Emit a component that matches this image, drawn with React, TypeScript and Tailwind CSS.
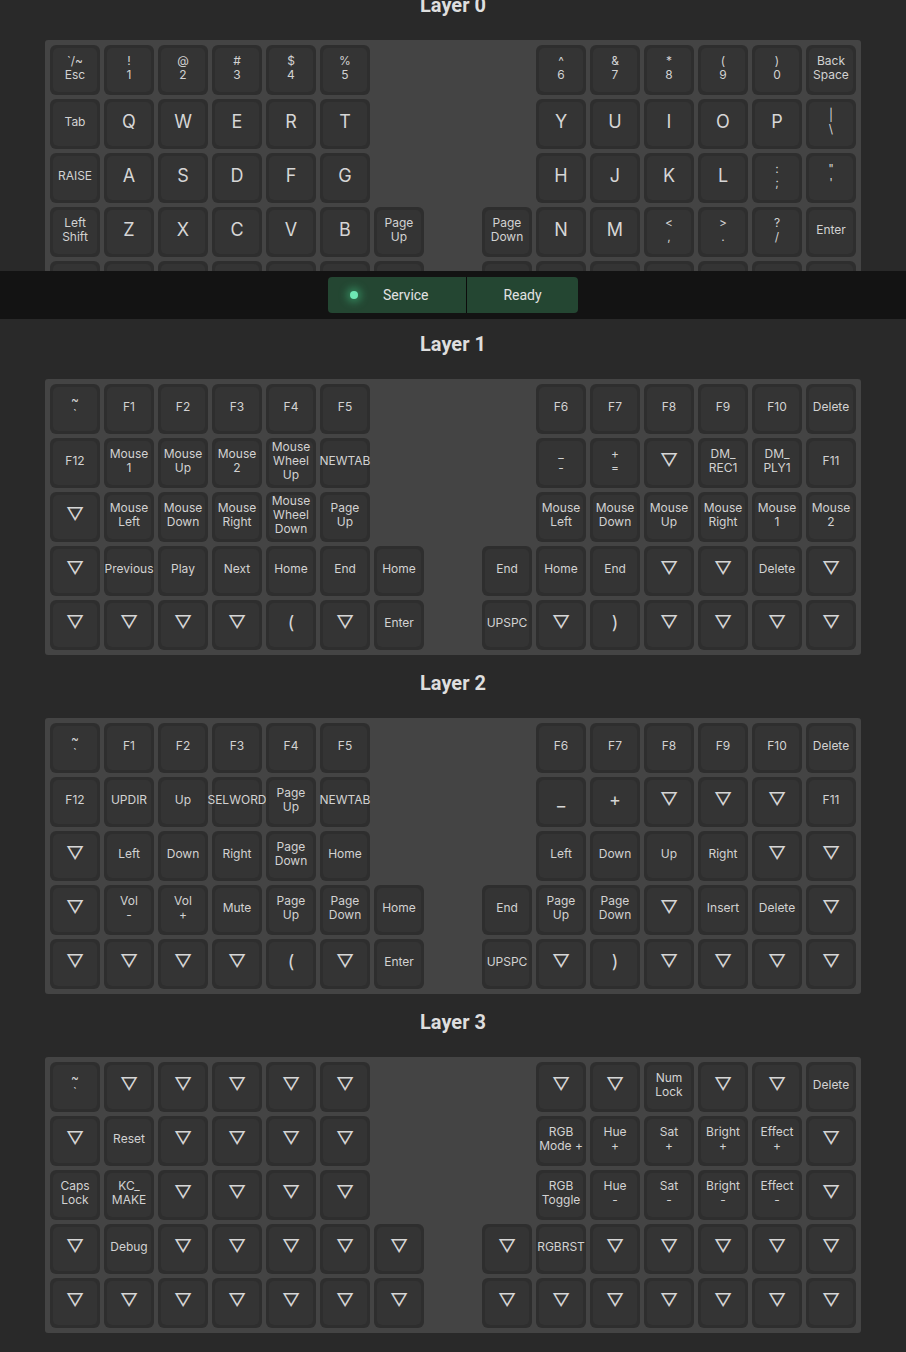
import React from "react";

type Label = string | string[] | null;

const T = "▽";

// each row has 15 slots; null is an empty slot
const split6 = (l: Label[], r: Label[]): Label[] => [...l, null, null, null, ...r];
const split7 = (l: Label[], r: Label[]): Label[] => [...l, null, ...r];

const layers: { name: string; rows: Label[][] }[] = [
  {
    name: "Layer 0",
    rows: [
      split6(
        [["`/~", "Esc"], ["!", "1"], ["@", "2"], ["#", "3"], ["$", "4"], ["%", "5"]],
        [["^", "6"], ["&", "7"], ["*", "8"], ["(", "9"], [")", "0"], ["Back", "Space"]]
      ),
      split6(["Tab", "Q", "W", "E", "R", "T"], ["Y", "U", "I", "O", "P", ["|", "\\"]]),
      split6(["RAISE", "A", "S", "D", "F", "G"], ["H", "J", "K", "L", [":", ";"], ["\"", "'"]]),
      split7(
        [["Left", "Shift"], "Z", "X", "C", "V", "B", ["Page", "Up"]],
        [["Page", "Down"], "N", "M", ["<", ","], [">", "."], ["?", "/"], "Enter"]
      ),
      // hidden behind the status bar
      split7(["", "", "", "", "", "", ""], ["", "", "", "", "", "", ""]),
    ],
  },
  {
    name: "Layer 1",
    rows: [
      split6([["~", "`"], "F1", "F2", "F3", "F4", "F5"], ["F6", "F7", "F8", "F9", "F10", "Delete"]),
      split6(
        ["F12", ["Mouse", "1"], ["Mouse", "Up"], ["Mouse", "2"], ["Mouse", "Wheel", "Up"], "NEWTAB"],
        [["_", "-"], ["+", "="], T, ["DM_", "REC1"], ["DM_", "PLY1"], "F11"]
      ),
      split6(
        [T, ["Mouse", "Left"], ["Mouse", "Down"], ["Mouse", "Right"], ["Mouse", "Wheel", "Down"], ["Page", "Up"]],
        [["Mouse", "Left"], ["Mouse", "Down"], ["Mouse", "Up"], ["Mouse", "Right"], ["Mouse", "1"], ["Mouse", "2"]]
      ),
      split7([T, "Previous", "Play", "Next", "Home", "End", "Home"], ["End", "Home", "End", T, T, "Delete", T]),
      split7([T, T, T, T, "(", T, "Enter"], ["UPSPC", T, ")", T, T, T, T]),
    ],
  },
  {
    name: "Layer 2",
    rows: [
      split6([["~", "`"], "F1", "F2", "F3", "F4", "F5"], ["F6", "F7", "F8", "F9", "F10", "Delete"]),
      split6(["F12", "UPDIR", "Up", "SELWORD", ["Page", "Up"], "NEWTAB"], ["_", "+", T, T, T, "F11"]),
      split6([T, "Left", "Down", "Right", ["Page", "Down"], "Home"], ["Left", "Down", "Up", "Right", T, T]),
      split7(
        [T, ["Vol", "-"], ["Vol", "+"], "Mute", ["Page", "Up"], ["Page", "Down"], "Home"],
        ["End", ["Page", "Up"], ["Page", "Down"], T, "Insert", "Delete", T]
      ),
      split7([T, T, T, T, "(", T, "Enter"], ["UPSPC", T, ")", T, T, T, T]),
    ],
  },
  {
    name: "Layer 3",
    rows: [
      split6([["~", "`"], T, T, T, T, T], [T, T, ["Num", "Lock"], T, T, "Delete"]),
      split6(
        [T, "Reset", T, T, T, T],
        [["RGB", "Mode +"], ["Hue", "+"], ["Sat", "+"], ["Bright", "+"], ["Effect", "+"], T]
      ),
      split6(
        [["Caps", "Lock"], ["KC_", "MAKE"], T, T, T, T],
        [["RGB", "Toggle"], ["Hue", "-"], ["Sat", "-"], ["Bright", "-"], ["Effect", "-"], T]
      ),
      split7([T, "Debug", T, T, T, T, T], [T, "RGBRST", T, T, T, T, T]),
      split7([T, T, T, T, T, T, T], [T, T, T, T, T, T, T]),
    ],
  },
];

function Key({ label }: { label: Label }) {
  if (label === null) return <div />;
  const lines = Array.isArray(label) ? label : label ? [label] : [];
  const big = !Array.isArray(label) && label.length === 1;
  return (
    <div className="h-[50px] w-[50px] rounded-[6px] bg-[#2e2e2e] p-[3px]">
      <div
        className={
          big
            ? "flex h-full w-full items-center justify-center rounded-[5px] bg-[#343434] pb-[4px] text-[18px] leading-none text-[#d6d6d6]"
            : "flex h-full w-full flex-col items-center justify-center rounded-[5px] bg-[#343434] pb-[4px] text-[12px] leading-[14px] text-[#d2d2d2]"
        }
      >
        {lines.map((line, i) => (
          <span key={i} className="whitespace-nowrap">
            {line}
          </span>
        ))}
      </div>
    </div>
  );
}

function LayerBoard({ name, rows }: { name: string; rows: Label[][] }) {
  return (
    <section>
      <h2 className="mt-[14px] mb-[21px] text-center font-['Roboto',sans-serif] text-[20px] font-bold leading-[28px] text-[#dedede]">
        {name}
      </h2>
      <div className="mx-auto grid w-[816px] grid-cols-[repeat(15,50px)] gap-[4px] rounded-[3px] bg-[#444444] p-[5px]">
        {rows.flatMap((row, r) => row.map((label, c) => <Key key={`${r}-${c}`} label={label} />))}
      </div>
    </section>
  );
}

export default function App() {
  return (
    <div className="relative h-[1352px] overflow-hidden bg-[#292929] font-['Inter','DejaVu_Sans',sans-serif]">
      <div className="-mt-[23px]">
        {layers.map((layer) => (
          <LayerBoard key={layer.name} name={layer.name} rows={layer.rows} />
        ))}
      </div>

      {/* status bar sits over the scrolled content */}
      <div className="absolute left-0 right-0 top-[271px] flex h-[48px] items-center justify-center bg-[#131313] font-['Roboto',sans-serif] text-[14px] text-[#e2e2e2]">
        <div className="flex h-[36px] overflow-hidden rounded-[4px] bg-[#244632]">
          <div className="flex w-[138px] items-center">
            <span className="ml-[22px] h-[8px] w-[8px] rounded-full bg-[#6ee8b4] shadow-[0_0_8px_3px_rgba(74,222,150,0.45)]" />
            <span className="ml-[25px]">Service</span>
          </div>
          <div className="w-px bg-[#0c0c0c]" />
          <div className="flex w-[111px] items-center justify-center">Ready</div>
        </div>
      </div>
    </div>
  );
}
